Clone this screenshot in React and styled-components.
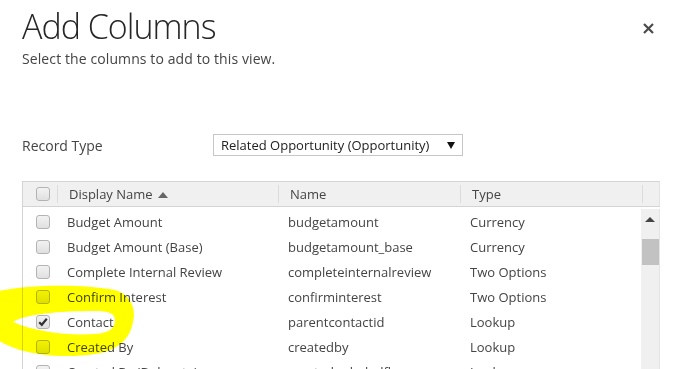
import React from "react"
import styled, { createGlobalStyle } from "styled-components"

const GlobalStyle = createGlobalStyle`
  html, body {
    margin: 0;
    padding: 0;
    background: #fff;
    overflow: hidden;
  }
  body {
    font-family: "Open Sans", "Noto Sans", sans-serif;
    color: #444;
  }
`

const Page = styled.div`
  position: relative;
  width: 675px;
  height: 369px;
  overflow: hidden;
  padding: 4px 15px 0 22px;
  box-sizing: border-box;
`

const TitleBar = styled.div`
  display: flex;
  justify-content: space-between;
  align-items: flex-start;
  height: 44px;
`

const Title = styled.h1`
  margin: 0;
  font-size: 34px;
  line-height: 44px;
  font-weight: 300;
  color: #262626;
  letter-spacing: -1px;
`

const CloseButton = styled.button`
  border: 0;
  background: none;
  padding: 0;
  margin: 16px 4px 0 0;
  width: 16px;
  height: 16px;
  display: flex;
  align-items: center;
  justify-content: center;
  cursor: pointer;
`

const Subtitle = styled.p`
  margin: 2px 0 0;
  font-size: 14px;
  line-height: 18px;
  color: #444;
  letter-spacing: 0.1px;
`

const FieldRow = styled.div`
  display: flex;
  align-items: center;
  margin-top: 66px;
  height: 22px;
`

const FieldLabel = styled.label`
  width: 191px;
  font-size: 14px;
  color: #444;
`

const Select = styled.div`
  width: 250px;
  height: 22px;
  box-sizing: border-box;
  border: 1px solid #c6c6c6;
  display: flex;
  align-items: center;
  justify-content: space-between;
  padding: 0 7px 0 7px;
  font-size: 13px;
  color: #222;
`

const Caret = styled.span`
  width: 0;
  height: 0;
  border-left: 4px solid transparent;
  border-right: 4px solid transparent;
  border-top: 7px solid #111;
`

const Table = styled.div`
  margin-top: 25px;
  width: 638px;
  font-size: 13px;
`

const HeaderRow = styled.div`
  display: grid;
  grid-template-columns: 34px 221px 182px 182px 19px;
  height: 26px;
  box-sizing: border-box;
  background: #f0f0f0;
  border: 1px solid #d4d4d4;
  border-right-color: #e2e2e2;
`

const HeaderCell = styled.div`
  display: flex;
  align-items: center;
  padding-left: ${(p) => (p.$check ? "13px" : "11px")};
  border-left: ${(p) => (p.$first ? "0" : "1px solid #dcdcdc")};
  margin: ${(p) => (p.$first ? "0" : "3px 0")};
  color: #444;
  gap: 5px;
`

const SortArrow = styled.span`
  width: 0;
  height: 0;
  margin-top: 1px;
  border-left: 5px solid transparent;
  border-right: 5px solid transparent;
  border-bottom: 6px solid #666;
`

const Body = styled.div`
  display: flex;
  border-left: 1px solid #d4d4d4;
  padding-top: 2px;
`

const Rows = styled.div`
  flex: 1;
`

const Row = styled.div`
  display: grid;
  grid-template-columns: 33px 221px 182px 182px;
  height: 25px;
  align-items: center;
  color: #444;
`

const Cell = styled.div`
  padding-left: ${(p) => (p.$check ? "13px" : "11px")};
  white-space: nowrap;
  display: flex;
  align-items: center;
`

const Box = styled.span`
  width: 14px;
  height: 14px;
  box-sizing: border-box;
  border: 1px solid #b3b3b3;
  border-radius: 3px;
  background: linear-gradient(#f2f2f2, #e0e0e0);
  display: inline-flex;
  align-items: center;
  justify-content: center;
`

const ScrollTrack = styled.div`
  width: 21px;
  height: 200px;
  background: #f0f0f0;
  display: flex;
  flex-direction: column;
  align-items: center;
  border-right: 1px solid #e4e4e4;
`

const ScrollArrow = styled.div`
  margin-top: 8px;
  width: 0;
  height: 0;
  border-left: 5px solid transparent;
  border-right: 5px solid transparent;
  border-bottom: 5px solid #444;
`

const ScrollThumb = styled.div`
  margin-top: 17px;
  width: 17px;
  height: 26px;
  background: #c2c2c2;
`

const Highlight = styled.svg`
  position: absolute;
  top: 0;
  left: 0;
  pointer-events: none;
  mix-blend-mode: multiply;
`

const rows = [
  ["Budget Amount", "budgetamount", "Currency"],
  ["Budget Amount (Base)", "budgetamount_base", "Currency"],
  ["Complete Internal Review", "completeinternalreview", "Two Options"],
  ["Confirm Interest", "confirminterest", "Two Options"],
  ["Contact", "parentcontactid", "Lookup", true],
  ["Created By", "createdby", "Lookup"],
  ["Created By (Delegate)", "createdonbehalfby", "Lookup"],
]

const Checkbox = ({ checked }) => (
  <Box>
    {checked && (
      <svg width="10" height="10" viewBox="0 0 10 10">
        <path d="M1.2 5.2 L3.8 7.8 L8.8 1.8" fill="none" stroke="#333" strokeWidth="2.2" />
      </svg>
    )}
  </Box>
)

const App = () => {
  return (
    <Page>
      <GlobalStyle />
      <TitleBar>
        <Title>Add Columns</Title>
        <CloseButton aria-label="Close">
          <svg width="11" height="11" viewBox="0 0 11 11">
            <path d="M1 1 L10 10 M10 1 L1 10" stroke="#4a4a4a" strokeWidth="2.2" />
          </svg>
        </CloseButton>
      </TitleBar>
      <Subtitle>Select the columns to add to this view.</Subtitle>

      <FieldRow>
        <FieldLabel>Record Type</FieldLabel>
        <Select>
          <span>Related Opportunity (Opportunity)</span>
          <Caret />
        </Select>
      </FieldRow>

      <Table>
        <HeaderRow>
          <HeaderCell $first $check>
            <Checkbox />
          </HeaderCell>
          <HeaderCell>
            Display Name <SortArrow />
          </HeaderCell>
          <HeaderCell>Name</HeaderCell>
          <HeaderCell>Type</HeaderCell>
          <HeaderCell />
        </HeaderRow>
        <Body>
          <Rows>
            {rows.map(([display, name, type, checked]) => (
              <Row key={name}>
                <Cell $check>
                  <Checkbox checked={checked} />
                </Cell>
                <Cell>{display}</Cell>
                <Cell>{name}</Cell>
                <Cell>{type}</Cell>
              </Row>
            ))}
          </Rows>
          <ScrollTrack>
            <ScrollArrow />
            <ScrollThumb />
          </ScrollTrack>
        </Body>
      </Table>

      <Highlight width="675" height="369" viewBox="0 0 675 369">
        <path
          fillRule="evenodd"
          fill="#ffff00"
          d="M -5 292 C 20 285, 80 283, 115 290 C 132 295, 136 310, 133 322 C 130 338, 120 350, 95 354 C 70 358, 40 356, 20 350 C 5 345, -5 340, -5 335 Z
             M 13 322 C 25 314, 60 311, 95 311 C 108 311, 115 313, 115 320 C 115 328, 110 333, 95 334 C 70 336, 35 332, 13 322 Z"
        />
      </Highlight>
    </Page>
  )
}

export default App
